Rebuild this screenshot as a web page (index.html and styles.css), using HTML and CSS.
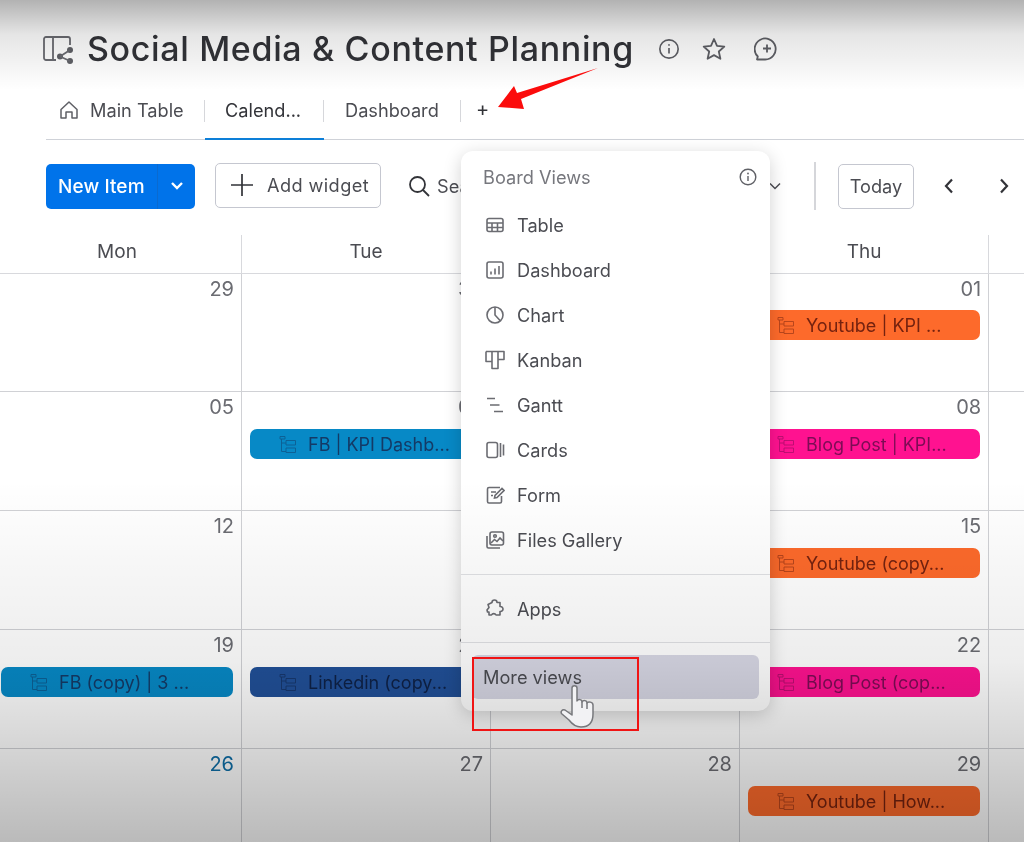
FILE: index.html
```html
<!DOCTYPE html>
<html lang="en">
<head>
<meta charset="utf-8">
<title>Social Media &amp; Content Planning</title>
<link rel="stylesheet" href="styles.css">
</head>
<body>
<svg class="sprite" width="0" height="0">
  <symbol id="tree" viewBox="0 0 17 17"><path d="M1 .5h5v2.500H1zM2.500 3v12.500H7M2.500 7H7M7 4.500h9.500V9H7zM7 12h9.500v4.500H7z" fill="none" stroke="currentColor" stroke-width=".9"/></symbol>
</svg>
<div class="app">
  <header class="title-row">
    <svg class="board-icon" viewBox="0 0 30 30" fill="none" stroke="#6a6b71" stroke-width="1.800"><path d="M13 26H3a2 2 0 0 1-2-2V5a2 2 0 0 1 2-2h22a2 2 0 0 1 2 2v6M10 3v23"/><circle cx="17" cy="22.500" r="3" fill="#5f6066" stroke="none"/><circle cx="27" cy="16" r="3" fill="#5f6066" stroke="none"/><circle cx="27" cy="27" r="3" fill="#5f6066" stroke="none"/><path d="m17 22.500 10-6.500M17 22.500 27 27"/></svg>
    <h1 class="title">Social Media &amp; Content Planning</h1>
    <svg class="title-icon first" viewBox="0 0 24 24" fill="none" stroke="#5f6066" stroke-width="1.800"><circle cx="12" cy="12" r="10"/><path d="M12 11v6"/><circle cx="12" cy="7.500" r="1" fill="#5f6066" stroke="none"/></svg>
    <svg class="title-icon second" viewBox="0 0 24 24" fill="none" stroke="#5f6066" stroke-width="1.800" stroke-linejoin="round"><path d="m12 2 3 6.800 7.300.8-5.500 4.900 1.600 7.300L12 18.100l-6.400 3.700 1.600-7.300L1.700 9.600 9 8.800z"/></svg>
    <svg class="title-icon third" viewBox="0 0 24 24" fill="none" stroke="#5f6066" stroke-width="1.800"><path d="M3 22.500h8A10.500 10.500 0 1 0 3.800 19.500z" stroke-linejoin="round"/><path d="M13 7.500v8M9 11.500h8"/></svg>
  </header>

  <nav class="tabs">
    <div class="tab tab-home">
      <svg class="home-icon" viewBox="0 0 20 20" fill="none" stroke="#5f6066" stroke-width="1.500" stroke-linejoin="round"><path d="M2 9.500 10 2l8 7.500V18h-5v-6H7v6H2z"/></svg>
      <span>Main Table</span>
    </div>
    <div class="tab tab-cal active"><span>Calend...</span></div>
    <div class="tab tab-dash"><span>Dashboard</span></div>
    <div class="tab-add">+</div>
  </nav>

  <section class="toolbar">
    <div class="new-item"><span class="new-label">New Item</span><span class="new-caret"><svg viewBox="0 0 14 14" width="14" height="14" fill="none" stroke="#fff" stroke-width="2.400"><path d="m2 4 5 5 5-5"/></svg></span></div>
    <div class="add-widget"><svg viewBox="0 0 22 22" width="22" height="22" fill="none" stroke="#323338" stroke-width="1.700"><path d="M11 0v22M0 11h22"/></svg><span>Add widget</span></div>
    <div class="search"><svg viewBox="0 0 22 22" width="22" height="22" fill="none" stroke="#323338" stroke-width="1.800"><circle cx="9.500" cy="9.500" r="7.500"/><path d="m15 15 6 6"/></svg><span>Search</span></div>
    <div class="spacer"></div>
    <svg class="view-caret" viewBox="0 0 12 12" width="12" height="12" fill="none" stroke="#4b4c52" stroke-width="1.500"><path d="m1 3.500 5 5 5-5"/></svg>
    <div class="tool-divider"></div>
    <div class="today">Today</div>
    <svg class="nav-arrow prev" viewBox="0 0 12 16" width="12" height="16" fill="none" stroke="#323338" stroke-width="2.200"><path d="M9 1.500 3 8l6 6.500"/></svg>
    <svg class="nav-arrow next" viewBox="0 0 12 16" width="12" height="16" fill="none" stroke="#323338" stroke-width="2.200"><path d="m3 1.500 6 6.500-6 6.500"/></svg>
  </section>

  <section class="calendar">
    <div class="day-head">Mon</div><div class="day-head">Tue</div><div class="day-head">Wed</div><div class="day-head">Thu</div><div class="day-head"></div>

    <div class="cell"><div class="date">29</div></div>
    <div class="cell"><div class="date">30</div></div>
    <div class="cell"><div class="date">31</div></div>
    <div class="cell"><div class="date">01</div><div class="event orange first-week"><svg class="tree"><use href="#tree"/></svg><span>Youtube | KPI ...</span></div></div>
    <div class="cell"></div>

    <div class="cell"><div class="date">05</div></div>
    <div class="cell"><div class="date">06</div><div class="event blue"><svg class="tree"><use href="#tree"/></svg><span>FB | KPI Dashb...</span></div></div>
    <div class="cell"><div class="date">07</div></div>
    <div class="cell"><div class="date">08</div><div class="event pink"><svg class="tree"><use href="#tree"/></svg><span>Blog Post | KPI...</span></div></div>
    <div class="cell"></div>

    <div class="cell"><div class="date">12</div></div>
    <div class="cell"><div class="date">13</div></div>
    <div class="cell"><div class="date">14</div></div>
    <div class="cell"><div class="date">15</div><div class="event orange"><svg class="tree"><use href="#tree"/></svg><span>Youtube (copy...</span></div></div>
    <div class="cell"></div>

    <div class="cell"><div class="date">19</div><div class="event blue"><svg class="tree"><use href="#tree"/></svg><span>FB (copy) | 3 ...</span></div></div>
    <div class="cell"><div class="date">20</div><div class="event navy"><svg class="tree"><use href="#tree"/></svg><span>Linkedin (copy...</span></div></div>
    <div class="cell"><div class="date">21</div></div>
    <div class="cell"><div class="date">22</div><div class="event pink"><svg class="tree"><use href="#tree"/></svg><span>Blog Post (cop...</span></div></div>
    <div class="cell"></div>

    <div class="cell"><div class="date today-date">26</div></div>
    <div class="cell"><div class="date">27</div></div>
    <div class="cell"><div class="date">28</div></div>
    <div class="cell"><div class="date">29</div><div class="event orange"><svg class="tree"><use href="#tree"/></svg><span>Youtube | How...</span></div></div>
    <div class="cell"></div>
  </section>

  <aside class="menu">
    <div class="menu-head">
      <span>Board Views</span>
      <svg viewBox="0 0 18 18" width="18" height="18" fill="none" stroke="#5f6066" stroke-width="1.400"><circle cx="9" cy="9" r="7.800"/><path d="M9 8v5"/><circle cx="9" cy="5.500" r=".9" fill="#5f6066" stroke="none"/></svg>
    </div>
    <div class="menu-item"><svg viewBox="0 0 20 20" class="menu-icon"><rect x="2" y="3.500" width="16" height="13" rx="2"/><path d="M2 8h16M2 12.500h16M7 8v8.500M12.500 8v8.500"/></svg><span>Table</span></div>
    <div class="menu-item"><svg viewBox="0 0 20 20" class="menu-icon"><rect x="2" y="2" width="16" height="16" rx="2"/><path d="M6 14.500v-3M10 14.500v-6M14 14.500V6"/></svg><span>Dashboard</span></div>
    <div class="menu-item"><svg viewBox="0 0 20 20" class="menu-icon"><circle cx="10" cy="10" r="8"/><path d="M10 2v8l5.500 6"/></svg><span>Chart</span></div>
    <div class="menu-item"><svg viewBox="0 0 20 20" class="menu-icon"><path d="M1 1.500h18v8h-6v-8M7 1.500v10H1v-10M7 1.500h6v17H7z" stroke-linejoin="round"/></svg><span>Kanban</span></div>
    <div class="menu-item"><svg viewBox="0 0 20 20" class="menu-icon"><path d="M2 3.500h8M5 10h9.500M9 16.500h9"/></svg><span>Gantt</span></div>
    <div class="menu-item"><svg viewBox="0 0 20 20" class="menu-icon"><rect x="2" y="2.500" width="10.500" height="15" rx="2"/><path d="M15.500 3v14M18.500 4.500v11"/></svg><span>Cards</span></div>
    <div class="menu-item"><svg viewBox="0 0 20 20" class="menu-icon"><path d="M16.500 11v5.500a1.500 1.500 0 0 1-1.500 1.500H4a1.500 1.500 0 0 1-1.500-1.500V4A1.500 1.500 0 0 1 4 2.500h11M6 7h5M6 10.500h2M9.500 13l.5-2.500 7-7 2 2-7 7z"/></svg><span>Form</span></div>
    <div class="menu-item"><svg viewBox="0 0 20 20" class="menu-icon"><rect x="5" y="2" width="13.500" height="13" rx="2"/><path d="M2 6v10.500A1.500 1.500 0 0 0 3.500 18H15M6 13l3.500-3.500 2.500 2 3-3.500 3 3"/><circle cx="10" cy="6" r="1.300"/></svg><span>Files Gallery</span></div>
    <div class="menu-sep first-sep"></div>
    <div class="menu-item"><svg viewBox="0 0 20 20" class="menu-icon"><path d="M7 3.500a2.500 2.500 0 0 1 5 0H15v4a2.500 2.500 0 0 1 3 2.500 2.500 2.500 0 0 1-3 2.500v3.500h-4a2.500 2.500 0 0 0-4.500 0H4v-3H2.500L2 11l2-2.500L3 5.500z" stroke-linejoin="round"/></svg><span>Apps</span></div>
    <div class="menu-sep"></div>
    <div class="menu-more"><span>More views</span></div>
  </aside>

  <div class="shade-top"></div>
  <div class="shade-bottom"></div>

  <svg class="red-arrow" viewBox="0 0 104 44"><path d="M102 1 25 32l3 10-26-2L18 19l3 7z" fill="#fb0c0c"/></svg>
  <div class="red-box"></div>
  <svg class="hand" viewBox="0 0 36 43" fill="#f2f2f4" stroke="#77787c" stroke-width="1.500" stroke-linejoin="round"><path d="M12 3c0-3 5-3 5 0v13c1-2 5-2 5 1 1-2 5-2 5 1 1-2 6-1 6 2v9c0 8-4 13-12 13-6 0-9-3-12-7L2 29c-2-2 0-5 3-4l7 5z"/><path d="M22 17v6M27 18v6" fill="none"/></svg>
</div>
</body>
</html>
```
FILE: styles.css
```css
* { box-sizing: border-box; }
html, body { margin: 0; padding: 0; }
body { background: #fff; font-family: "Inter", "Liberation Sans", sans-serif; color: #323338; }
.sprite { position: absolute; }
.app { position: relative; width: 1024px; height: 842px; overflow: hidden; background: #fff; filter: blur(.45px); }

.title-row { display: flex; align-items: center; height: 42px; margin: 28px 0 0 43px; }
.board-icon { width: 30px; height: 30px; flex: none; }
.title { margin: 0 0 0 14px; font-size: 34px; font-weight: 500; line-height: 42px; color: #323338; letter-spacing: .65px; white-space: nowrap; }
.title-icon { flex: none; width: 22px; height: 22px; }
.title-icon.first { margin-left: 24px; }
.title-icon.second { margin-left: 22px; width: 24px; height: 24px; }
.title-icon.third { margin-left: 28px; width: 24px; height: 24px; }

.tabs { display: flex; align-items: stretch; height: 48px; margin: 22px 0 0 46px; border-bottom: 1px solid #cfd2d8; font-size: 18.2px; color: #4b4c52; }
.tab { position: relative; display: flex; align-items: center; height: 48px; padding-bottom: 13px; }
.tab::after { content: ""; position: absolute; right: 0; top: 8px; height: 22px; width: 1px; background: #d6d7db; }
.tab-home { width: 159px; padding-left: 13px; gap: 11px; }
.home-icon { width: 20px; height: 20px; flex: none; }
.tab-cal { width: 119px; padding-left: 20px; }
.tab-dash { width: 137px; padding-left: 21px; }
.tab.active { color: #323338; }
.tab.active::before { content: ""; position: absolute; left: 0; right: 0; bottom: 0; height: 2px; background: #0d7fd8; }
.tab-add { padding: 4px 0 0 15px; font-size: 20px; line-height: 26px; color: #323338; }

.toolbar { display: flex; align-items: center; height: 46px; margin: 23px 0 0 46px; padding-right: 14px; font-size: 18.2px; }
.new-item { display: flex; width: 149px; height: 45px; background: #0073ea; border-radius: 5px; color: #fff; }
.new-label { flex: 1; line-height: 45px; padding-left: 12px; font-size: 19px; font-weight: 500; letter-spacing: .1px; white-space: nowrap; }
.new-caret { display: flex; align-items: center; justify-content: center; width: 38px; border-left: 1px solid #0a6ad0; }
.add-widget { display: flex; align-items: center; gap: 14px; width: 166px; height: 45px; margin: 0 0 2px 20px; padding-left: 15px; border: 1px solid #c5c7d0; border-radius: 5px; background: #fff; color: #4b4c52; letter-spacing: .4px; }
.search { display: flex; align-items: center; gap: 7px; margin-left: 27px; color: #4b4c52; }
.spacer { flex: 1; }
.view-caret { margin-right: 33px; }
.tool-divider { width: 2px; height: 48px; background: #d5d6da; }
.today { width: 76px; height: 45px; margin-left: 22px; border: 1px solid #c5c7d0; border-radius: 5px; line-height: 43px; text-align: center; color: #4b4c52; }
.nav-arrow.prev { margin-left: 29px; }
.nav-arrow.next { margin-left: 43px; }

.calendar { display: grid; grid-template-columns: 249px 249px 249px 249.25px 249px; grid-template-rows: 39px 118px repeat(4, 119px); margin: 26px 0 0 -7px; }
.day-head { height: 39px; line-height: 33px; text-align: center; font-size: 19px; color: #4b4c52; border-right: 1px solid #d8d9dd; border-bottom: 1px solid #d8d9dd; }
.cell { min-width: 0; padding: 0 8px; border-right: 1px solid #d0d1d5; border-bottom: 1px solid #d0d1d5; }
.date { height: 28px; padding-top: 2px; text-align: right; font-size: 20px; line-height: 26px; color: #6b6c72; margin-right: -1px; }
.today-date { color: #0f6fa8; }
.event { display: flex; align-items: center; height: 30px; margin-top: 9px; padding-left: 29px; gap: 12px; border-radius: 7px; font-size: 18px; white-space: nowrap; overflow: hidden; }
.event.first-week { margin-top: 8px; }
.event span { padding-top: 1px; }
.tree { width: 17px; height: 17px; flex: none; opacity: .55; }
.orange { background: #fd6a2b; color: #74220f; }
.pink { background: #ff1290; color: #7d0c55; }
.blue { background: #0789c6; color: #143a66; }
.navy { background: #215098; color: #0e2146; }

.menu { position: absolute; left: 461px; top: 151px; width: 309px; height: 560px; padding: 0 11px; background: #fff; border-radius: 12px; box-shadow: 0 4px 18px rgba(0,0,0,.18); font-size: 18.2px; color: #4b4c52; }
.menu-head { display: flex; align-items: center; justify-content: space-between; height: 51px; padding: 0 2px 0 11px; color: #76777d; }
.menu-item { display: flex; align-items: center; gap: 12px; height: 45px; padding-left: 13px; margin-top: 0; }
.menu-icon { width: 20px; height: 20px; flex: none; fill: none; stroke: #6b6c72; stroke-width: 1.600; }
.menu-sep { height: 1px; margin: 11px -11px; background: #e0e1e4; }
.first-sep { margin: 12px -11px 11px; }
.menu-more { height: 44px; padding: 0 11px; margin-top: 12px; line-height: 44px; background: #d7d7e4; border-radius: 6px; color: #4b4c52; }

.shade-top { position: absolute; left: 0; top: 0; width: 100%; height: 90px; background: linear-gradient(to bottom, rgba(0,0,0,.30), rgba(0,0,0,.10) 38%, rgba(0,0,0,0)); pointer-events: none; }
.shade-bottom { position: absolute; left: 0; top: 480px; width: 100%; height: 362px; background: linear-gradient(to bottom, rgba(0,0,0,0), rgba(0,0,0,.07) 50%, rgba(0,0,0,.27)); pointer-events: none; }

.red-arrow { position: absolute; left: 496px; top: 67px; width: 104px; height: 44px; }
.red-box { position: absolute; left: 472px; top: 657px; width: 167px; height: 74px; border: 2px solid #f01414; }
.hand { position: absolute; left: 560px; top: 685px; width: 36px; height: 43px; }
```
